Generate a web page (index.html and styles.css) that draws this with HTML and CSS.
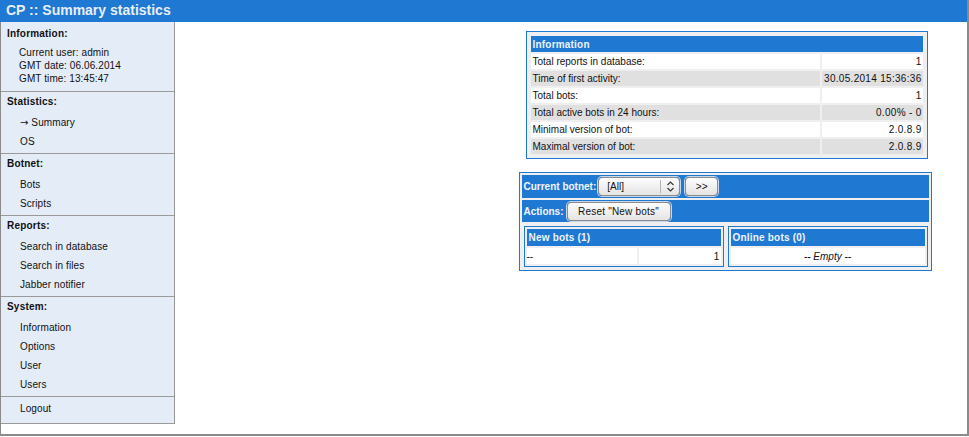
FILE: index.html
```html
<!DOCTYPE html>
<html lang="en">
<head>
  <meta charset="UTF-8">
  <meta name="viewport" content="width=device-width, initial-scale=1.0">
  <title>CP :: Summary statistics</title>
  <link rel="stylesheet" href="styles.css">
</head>
<body>
<div class="page">
  <div class="header">CP :: Summary statistics</div>
  <div class="frame">
    <div class="sidebar">
      <div class="menu-section info-section">
        <div class="menu-title">Information:</div>
        <div class="info-line">Current user: admin</div>
        <div class="info-line">GMT date: 06.06.2014</div>
        <div class="info-line">GMT time: 13:45:47</div>
      </div>
      <div class="menu-section">
        <div class="menu-title">Statistics:</div>
        <a class="menu-item" href="#"><span class="arrow">&rarr;</span> Summary</a>
        <a class="menu-item" href="#">OS</a>
      </div>
      <div class="menu-section">
        <div class="menu-title">Botnet:</div>
        <a class="menu-item" href="#">Bots</a>
        <a class="menu-item" href="#">Scripts</a>
      </div>
      <div class="menu-section">
        <div class="menu-title">Reports:</div>
        <a class="menu-item" href="#">Search in database</a>
        <a class="menu-item" href="#">Search in files</a>
        <a class="menu-item" href="#">Jabber notifier</a>
      </div>
      <div class="menu-section">
        <div class="menu-title">System:</div>
        <a class="menu-item" href="#">Information</a>
        <a class="menu-item" href="#">Options</a>
        <a class="menu-item" href="#">User</a>
        <a class="menu-item" href="#">Users</a>
      </div>
      <div class="menu-section logout-section">
        <a class="menu-item" href="#">Logout</a>
      </div>
    </div>

    <div class="content">
      <table class="grid info">
        <tr><th colspan="2">Information</th></tr>
        <tr><td>Total reports in database:</td><td class="value">1</td></tr>
        <tr class="alt"><td>Time of first activity:</td><td class="value">30.05.2014 15:36:36</td></tr>
        <tr><td>Total bots:</td><td class="value">1</td></tr>
        <tr class="alt"><td>Total active bots in 24 hours:</td><td class="value">0.00% - 0</td></tr>
        <tr><td>Minimal version of bot:</td><td class="value">2.0.8.9</td></tr>
        <tr class="alt"><td>Maximal version of bot:</td><td class="value">2.0.8.9</td></tr>
      </table>

      <table class="control">
        <tr>
          <td class="bar bar-first">
            <form class="bar-form">
              <label for="botnet">Current botnet:</label>
              <span class="select">
                <select id="botnet"><option>[All]</option></select>
                <span class="select-arrow">
                  <svg width="9" height="11" viewBox="0 0 9 11"><path d="M1.5 4 L4.5 1 L7.5 4 M1.5 7 L4.5 10 L7.5 7" fill="none" stroke="#333" stroke-width="1.1"/></svg>
                </span>
              </span>
              <button type="button" class="btn btn-go">&gt;&gt;</button>
            </form>
          </td>
        </tr>
        <tr>
          <td class="bar bar-second">
            <div class="bar-form">
              <span>Actions:</span>
              <button type="button" class="btn btn-reset">Reset "New bots"</button>
            </div>
          </td>
        </tr>
        <tr>
          <td class="lists">
            <div class="lists-row">
              <table class="grid sub">
                <tr><th colspan="2">New bots (1)</th></tr>
                <tr><td>--</td><td class="value count">1</td></tr>
              </table>
              <table class="grid sub">
                <tr><th>Online bots (0)</th></tr>
                <tr><td class="empty"><i>-- Empty --</i></td></tr>
              </table>
            </div>
          </td>
        </tr>
      </table>
    </div>
  </div>
</div>
</body>
</html>
```

FILE: styles.css
```css
body {
  margin: 0;
  font-family: "Liberation Sans", Arial, sans-serif;
  font-size: 10px;
  color: #111;
  background: #fff;
}

.page {
  width: 969px;
  height: 436px;
  box-sizing: border-box;
  border-right: 2px solid #8a8a8a;
  display: flex;
  flex-direction: column;
}

.header {
  height: 22px;
  flex-shrink: 0;
  background: #1f78d1;
  color: #e8eef8;
  font-size: 14px;
  font-weight: bold;
  line-height: 21px;
  padding-left: 6px;
}

.frame {
  flex: 1;
  display: flex;
  align-items: flex-start;
  border-left: 1px solid #8a8a8a;
  border-bottom: 2px solid #8a8a8a;
}

/* left menu */
.sidebar {
  width: 173px;
  flex-shrink: 0;
  background: #e4ecf8;
  border-right: 1px solid #999;
}

.menu-section {
  display: flex;
  flex-direction: column;
  padding: 3px 0 2px;
  border-bottom: 1px solid #999;
}

.menu-title {
  font-weight: bold;
  line-height: 13px;
  padding-left: 6px;
  margin-bottom: 5px;
  letter-spacing: 0.2px;
}

.menu-item {
  color: #111;
  text-decoration: none;
  height: 19px;
  line-height: 19px;
  padding-left: 19px;
  letter-spacing: 0.1px;
}

.arrow {
  font-family: "DejaVu Sans", sans-serif;
  font-size: 10px;
  line-height: 0;
}

.info-section {
  padding: 5px 0 6px;
}

.info-section .menu-title {
  margin-bottom: 6px;
}

.info-line {
  line-height: 13px;
  padding-left: 18px;
  letter-spacing: 0.1px;
}

.logout-section {
  padding: 2px 0 5px;
}

/* main area */
.content {
  flex: 1;
  display: flex;
  flex-direction: column;
  align-items: center;
  padding: 9px 0 0 311px;
}

.grid {
  border: 1px solid #1f78d1;
  border-spacing: 2px;
  background: #efefef;
  font-size: 10px;
}

.grid th {
  background: #1f78d1;
  color: #eef3fb;
  font-weight: bold;
  text-align: left;
  height: 16px;
  padding: 0 2px;
  letter-spacing: 0.2px;
}

.grid td {
  background: #fff;
  height: 15px;
  padding: 0 2px;
  white-space: nowrap;
}

.grid tr.alt td {
  background: #e0e0e0;
}

.grid td.value {
  text-align: right;
  width: 96px;
  letter-spacing: 0.3px;
  padding: 0 1px 0 2px;
}

.info {
  width: 402px;
  padding: 2px;
}

.control {
  width: 413px;
  margin: 13px 3px 0 0;
  border: 1px solid #1f78d1;
  border-spacing: 2px;
  background: #efefef;
}

.control td {
  padding: 0;
}

.bar {
  background: #1f78d1;
  color: #f2f6fc;
  font-weight: bold;
}

.bar-first {
  height: 23px;
}

.bar-second {
  height: 22px;
}

.bar-form {
  display: flex;
  align-items: center;
  gap: 2px;
  margin: 0;
  padding-left: 2px;
}

.btn {
  font-family: inherit;
  font-size: 10px;
  color: #111;
  height: 19px;
  padding: 0;
  border: 1px solid #8c8c8c;
  border-radius: 4px;
  background: linear-gradient(#fdfdfd, #e4e4e4);
  box-shadow: 0 0 0 1px #c7d6ea;
  letter-spacing: 0.2px;
}

.btn-go {
  width: 33px;
  margin-left: 3px;
}

.btn-reset {
  width: 104px;
  margin-left: 1px;
}

.select {
  display: flex;
  width: 82px;
  height: 19px;
  box-sizing: border-box;
  border: 1px solid #8c8c8c;
  border-radius: 4px;
  background: linear-gradient(#fdfdfd, #e4e4e4);
  box-shadow: 0 0 0 1px #c7d6ea;
}

.select select {
  appearance: none;
  -webkit-appearance: none;
  flex: 1;
  min-width: 0;
  border: none;
  background: transparent;
  font-family: inherit;
  font-size: 10px;
  color: #111;
  padding: 0 0 0 8px;
  outline: none;
}

.select-arrow {
  width: 18px;
  border-left: 1px solid #b4b4b4;
  margin: 2px 0;
  display: flex;
  align-items: center;
  justify-content: center;
}

.lists {
  padding: 2px 1px 1px 2px !important;
}

.lists-row {
  display: flex;
  gap: 4px;
}

.sub {
  flex: 1;
  padding: 0;
}

.sub th {
  height: 17px;
}

.sub td {
  height: 16px;
}

.sub td.count {
  width: 79px;
}

.sub td.empty {
  text-align: center;
  letter-spacing: 0;
}
```
